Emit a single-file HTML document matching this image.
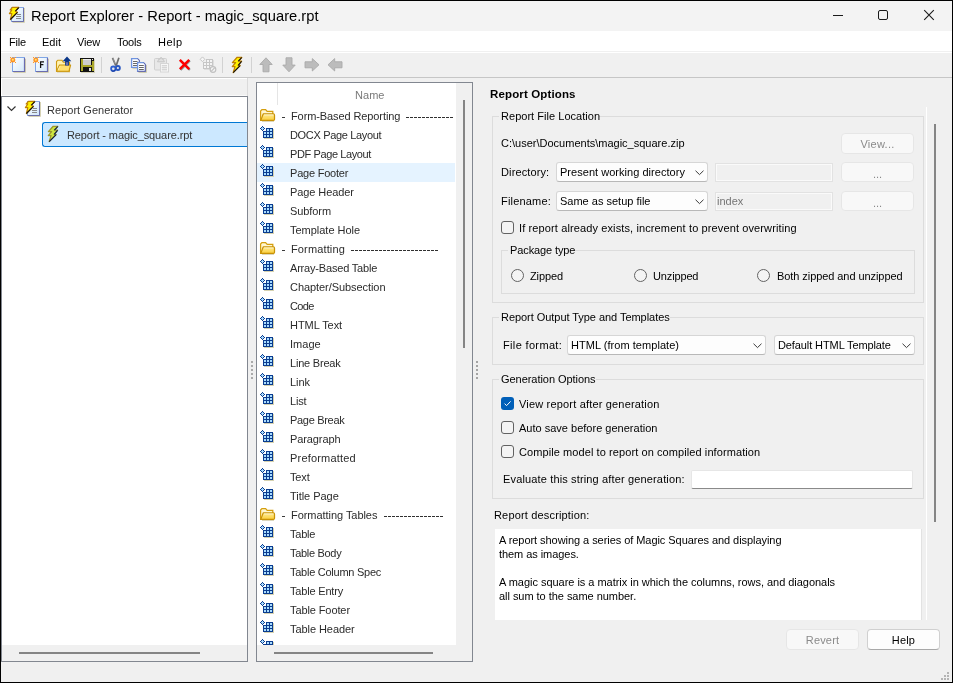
<!DOCTYPE html>
<html><head><meta charset="utf-8">
<style>
*{box-sizing:border-box}
html,body{margin:0;padding:0}
body{width:953px;height:683px;overflow:hidden;position:relative;background:#f0f0f0;font-family:"Liberation Sans",sans-serif;font-size:11px;color:#1a1a1a}
.a{position:absolute}
.t{position:absolute;white-space:pre;line-height:14px;will-change:transform}
</style></head><body>
<div class="a" style="left:0px;top:0px;width:953px;height:31px;background:#f3f3f3"></div><svg class="a" style="left:8px;top:5px" width="18" height="18" viewBox="0 0 18 18" ><defs><linearGradient id="pg" x1="0" y1="0" x2="1" y2="1"><stop offset="0" stop-color="#ffffff"/><stop offset="1" stop-color="#cfe6fb"/></linearGradient></defs><path d="M4.5 17.5 H16.5 V3" fill="none" stroke="#d6d2b4" stroke-width="1"/><rect x="3.5" y="2.5" width="12" height="14" fill="url(#pg)" stroke="#86a6e0" stroke-width="1"/><path d="M15.5 3 V16.5 H4" fill="none" stroke="#6c6ea8" stroke-width="1"/><path d="M9 9.5 H13 M8 11.5 H13 M8 13.5 H13" stroke="#8a8a8a" stroke-width="1"/><path d="M4.4 2.4 H10.8 L7.4 6.2 L9.5 7.2 L2.4 14.5 L3.8 8.6 H1.4 L3.8 5 H2.2 Z" fill="#fff200" stroke="#c08000" stroke-width="1.2" stroke-linejoin="round"/><path d="M10.8 2.6 L7.4 6.2 M9.5 7.4 L2.4 14.5" stroke="#111" stroke-width="1.1"/></svg><div class="t" style="left:31px;top:5.5px;font-size:14.7px;color:#000;line-height:20px;letter-spacing:0.024px;">Report Explorer - Report - magic_square.rpt</div><div class="a" style="left:833px;top:15px;width:10px;height:1px;background:#1a1a1a"></div><div class="a" style="left:878px;top:10px;width:10px;height:10px;border:1px solid #1a1a1a;border-radius:2px"></div><svg class="a" style="left:923px;top:9px" width="13" height="13" viewBox="0 0 13 13"><path d="M1.2 1.2 L10.8 10.8 M10.8 1.2 L1.2 10.8" stroke="#1a1a1a" stroke-width="1.1"/></svg>
<div class="a" style="left:0px;top:31px;width:953px;height:20px;background:#fff"></div><div class="a" style="left:0px;top:51px;width:953px;height:1px;background:#f0f0f0"></div><div class="a" style="left:0px;top:52px;width:953px;height:1px;background:#fff"></div><div class="t" style="left:9px;top:35px;font-size:11px;color:#000;line-height:14px;letter-spacing:-0.200px;">File</div><div class="t" style="left:42px;top:35px;font-size:11px;color:#000;line-height:14px;">Edit</div><div class="t" style="left:77px;top:35px;font-size:11px;color:#000;line-height:14px;letter-spacing:-0.167px;">View</div><div class="t" style="left:117px;top:35px;font-size:11px;color:#000;line-height:14px;letter-spacing:-0.250px;">Tools</div><div class="t" style="left:158px;top:35px;font-size:11px;color:#000;line-height:14px;letter-spacing:0.500px;">Help</div><div class="a" style="left:0px;top:77px;width:953px;height:1px;background:#c6c6c6"></div>
<svg class="a" style="left:10px;top:56px" width="17" height="17" viewBox="0 0 17 17" ><defs><linearGradient id="np" x1="0" y1="0" x2="1" y2="1"><stop offset="0" stop-color="#ffffff"/><stop offset="1" stop-color="#d2e8fb"/></linearGradient></defs><path d="M3.5 16.5 H15.5 V3" fill="none" stroke="#d4d0b2" stroke-width="1"/><rect x="2.5" y="1.5" width="12" height="14" fill="url(#np)" stroke="#80a6e6" stroke-width="1"/><path d="M14.5 2 V15.5 H3" fill="none" stroke="#6a6cb0" stroke-width="1.2"/><circle cx="2.8" cy="3.9" r="2.5" fill="#ff9422"/><circle cx="2.8" cy="3.7" r="1.0" fill="#ffe27a"/><g shape-rendering="crispEdges" fill="#ff9a28"><rect x="0" y="1" width="1" height="1"/><rect x="5" y="1" width="1" height="1"/><rect x="0" y="6" width="1" height="1"/><rect x="5" y="6" width="1" height="1"/></g></svg><svg class="a" style="left:33px;top:56px" width="17" height="17" viewBox="0 0 17 17" ><defs><linearGradient id="np" x1="0" y1="0" x2="1" y2="1"><stop offset="0" stop-color="#ffffff"/><stop offset="1" stop-color="#d2e8fb"/></linearGradient></defs><path d="M3.5 16.5 H15.5 V3" fill="none" stroke="#d4d0b2" stroke-width="1"/><rect x="2.5" y="1.5" width="12" height="14" fill="url(#np)" stroke="#80a6e6" stroke-width="1"/><path d="M14.5 2 V15.5 H3" fill="none" stroke="#6a6cb0" stroke-width="1.2"/><path d="M7.6 12 V5.8 H11 M7.6 8.7 H10.4" fill="none" stroke="#111" stroke-width="1.25"/><circle cx="2.8" cy="3.9" r="2.5" fill="#ff9422"/><circle cx="2.8" cy="3.7" r="1.0" fill="#ffe27a"/><g shape-rendering="crispEdges" fill="#ff9a28"><rect x="0" y="1" width="1" height="1"/><rect x="5" y="1" width="1" height="1"/><rect x="0" y="6" width="1" height="1"/><rect x="5" y="6" width="1" height="1"/></g></svg><svg class="a" style="left:54px;top:54px" width="19" height="19" viewBox="0 0 19 19" ><path d="M3 18.2 H16" stroke="#d8d2b6"/><path d="M2.5 17.2 V7.5 L3.8 6.2 H8 L9.3 8.3 H15.5 V17.2 Z" fill="#fff2b0" stroke="#cf9c12" stroke-width="1.1"/><path d="M2.6 17.2 L5.5 11 H16.6 L15 17.2 Z" fill="#ffe06e" stroke="#c99510" stroke-width="1.1" stroke-linejoin="round"/><path d="M4 16.2 L6 12" stroke="#fff7c0" stroke-width="0.8"/><path d="M13 2.6 L17.3 7.2 H14.9 V11.6 H11.1 V7.2 H8.7 Z" fill="#0b3788"/><rect x="12" y="8.2" width="2" height="3.4" fill="#6f70a8"/></svg><svg class="a" style="left:77px;top:54px" width="19" height="19" viewBox="0 0 19 19" ><g shape-rendering="crispEdges"><rect x="4" y="17.5" width="14" height="1" fill="#d6d2b8"/><rect x="17" y="5" width="1" height="13" fill="#d6d2b8"/><rect x="3" y="4" width="14" height="14" fill="#121212"/><rect x="4" y="5" width="2" height="12" fill="#aaa62a"/><rect x="15" y="7" width="2" height="10" fill="#aaa62a"/><rect x="4" y="11" width="13" height="2" fill="#aaa62a"/><rect x="6" y="5" width="8" height="6" fill="#cdcdcd"/><rect x="6" y="5" width="8" height="1" fill="#ececec"/><rect x="12" y="14" width="2" height="3" fill="#e2e2e2"/><rect x="15" y="5" width="1" height="1" fill="#e8e8e8"/></g></svg><div class="a" style="left:101px;top:57px;width:1px;height:16px;background:#d2d2d2"></div><svg class="a" style="left:106px;top:54px" width="19" height="19" viewBox="0 0 19 19" ><path d="M6.5 3.8 L9.8 11.6 M12.9 3.8 L10.2 11.6" stroke="#6e6e6e" stroke-width="1.7"/><path d="M6.8 4.3 L9.3 10" stroke="#b8b8b8" stroke-width="0.5"/><circle cx="7.3" cy="14.7" r="2.2" fill="#e8e8e8" stroke="#2f60d0" stroke-width="1.8"/><circle cx="11.9" cy="14.0" r="2.0" fill="#e8e8e8" stroke="#2856c0" stroke-width="1.8"/><path d="M5.5 16.6 A2.2 2.2 0 0 0 9.3 15.6" fill="none" stroke="#12308a" stroke-width="0.9"/></svg><svg class="a" style="left:129px;top:54px" width="19" height="19" viewBox="0 0 19 19" ><path d="M3.5 14.6 H10" stroke="#d2ceb0"/><path d="M2.6 4.6 H8.6 L10.4 6.4 V13.4 H2.6 Z" fill="#fff" stroke="#6f94e0" stroke-width="1.3"/><path d="M8.6 4.6 L10.4 6.4 V13.4" fill="none" stroke="#6a6aa8" stroke-width="1"/><path d="M4 7.5 H8.5 M4 9.5 H8 M4 11.5 H8" stroke="#6a6a6a"/><path d="M9.5 18.5 H17.5 V11" fill="none" stroke="#d2ceb0"/><path d="M8.6 8.6 H14.6 L16.4 10.4 V17.4 H8.6 Z" fill="#fff" stroke="#6f94e0" stroke-width="1.3"/><path d="M14.6 8.6 L16.4 10.4 V17.4 H8.6" fill="none" stroke="#6a6aa8" stroke-width="1"/><path d="M10 11.5 H14.8 M10 13.5 H14.8 M10 15.5 H14.8" stroke="#666"/></svg><svg class="a" style="left:152px;top:54px" width="19" height="19" viewBox="0 0 19 19" ><rect x="2.5" y="4.5" width="12" height="11.5" rx="1" fill="#e8e8e8" stroke="#d0d0d0"/><path d="M5.5 7.8 L6.8 5.2 H8 L8.6 3.6 H9.6 L10.2 5.2 H11.2 L12.4 7.8 Z" fill="#e0e0e0" stroke="#c4c4c4" stroke-width="0.9"/><rect x="8.5" y="9.5" width="8" height="8.5" fill="#f7f7f7" stroke="#d6d6d6"/><path d="M9.8 11.8 H15 M9.8 13.8 H15 M9.8 15.8 H15" stroke="#c8c8c8"/></svg><svg class="a" style="left:175px;top:54px" width="19" height="19" viewBox="0 0 19 19" ><path d="M4.8 5.8 L14.2 15.2 M14.2 5.8 L4.8 15.2" stroke="#8a9494" stroke-width="2.3" transform="translate(0.7,0.7)"/><path d="M4.8 5.8 L14.2 15.2 M14.2 5.8 L4.8 15.2" stroke="#ff0000" stroke-width="2.4"/></svg><svg class="a" style="left:198px;top:54px" width="19" height="19" viewBox="0 0 19 19" ><g shape-rendering="crispEdges"><rect x="6" y="15" width="10" height="1" fill="#dedede"/><rect x="15" y="6" width="1" height="10" fill="#dedede"/><rect x="5" y="8" width="10" height="7" fill="#c6c6c6"/><rect x="8" y="5" width="7" height="3" fill="#c6c6c6"/><rect x="9" y="6" width="2" height="2" fill="#f4f4f4"/><rect x="12" y="6" width="2" height="2" fill="#f4f4f4"/><rect x="6" y="9" width="2" height="2" fill="#f4f4f4"/><rect x="9" y="9" width="2" height="2" fill="#f4f4f4"/><rect x="12" y="9" width="2" height="2" fill="#f4f4f4"/><rect x="6" y="12" width="2" height="2" fill="#f4f4f4"/><rect x="9" y="12" width="2" height="2" fill="#f4f4f4"/><rect x="12" y="12" width="2" height="2" fill="#f4f4f4"/></g><path d="M4.5 2.9 L6.8 5.3 L4.5 7.7 L2.2 5.3 Z" fill="#f6f6f6" stroke="#c6c6c6"/><circle cx="15" cy="15.5" r="2.8" fill="#f4f4f4" stroke="#c0c0c0" stroke-width="1.2"/><path d="M13.2 17.3 L16.8 13.7" stroke="#c0c0c0" stroke-width="1.2"/></svg><div class="a" style="left:222px;top:57px;width:1px;height:16px;background:#d2d2d2"></div><svg class="a" style="left:230px;top:56px" width="14" height="18" viewBox="0 0 14 18" ><path d="M7.2 1.3 H11.8 L8.4 5.2 H11.6 L8.2 9.4 H10.2 L3.2 16.6 L5 10.6 H2.3 L5.6 6.6 H2.4 Z" fill="#fff200" stroke="#c08000" stroke-width="1.3" stroke-linejoin="round"/><path d="M11.8 1.5 L8.4 5.2 M11.6 5.4 L8.2 9.4 M10.2 9.6 L3.2 16.6" stroke="#111" stroke-width="1.1"/></svg><div class="a" style="left:251px;top:57px;width:1px;height:16px;background:#d2d2d2"></div><svg class="a" style="left:256px;top:54px" width="21" height="21" viewBox="0 0 21 21" ><g transform="rotate(0 10 10.8)"><path d="M10 3.8 L16.2 10.5 H13 V17.8 H7 V10.5 H3.8 Z" fill="#bcbcbc" stroke="#a9a9a9" stroke-width="0.9" stroke-linejoin="round"/></g></svg><svg class="a" style="left:279px;top:54px" width="21" height="21" viewBox="0 0 21 21" ><g transform="rotate(180 10 10.8)"><path d="M10 3.8 L16.2 10.5 H13 V17.8 H7 V10.5 H3.8 Z" fill="#bcbcbc" stroke="#a9a9a9" stroke-width="0.9" stroke-linejoin="round"/></g></svg><svg class="a" style="left:302px;top:54px" width="21" height="21" viewBox="0 0 21 21" ><g transform="rotate(90 10 10.8)"><path d="M10 3.8 L16.2 10.5 H13 V17.8 H7 V10.5 H3.8 Z" fill="#bcbcbc" stroke="#a9a9a9" stroke-width="0.9" stroke-linejoin="round"/></g></svg><svg class="a" style="left:325px;top:54px" width="21" height="21" viewBox="0 0 21 21" ><g transform="rotate(270 10 10.8)"><path d="M10 3.8 L16.2 10.5 H13 V17.8 H7 V10.5 H3.8 Z" fill="#bcbcbc" stroke="#a9a9a9" stroke-width="0.9" stroke-linejoin="round"/></g></svg>
<div class="a" style="left:247px;top:78px;width:1px;height:18px;background:#dadada"></div><div class="a" style="left:1px;top:78px;width:246px;height:1px;background:#fff"></div><div class="a" style="left:1px;top:95px;width:246px;height:1px;background:#fafafa"></div><div class="a" style="left:1px;top:78px;width:1px;height:18px;background:#fff"></div><div class="a" style="left:1px;top:96px;width:247px;height:566px;border:1px solid #828790;background:#fff"></div><div class="a" style="left:2px;top:645px;width:245px;height:16px;background:#f0f0f0"></div><div class="a" style="left:19px;top:652px;width:181px;height:2px;background:#858585"></div><svg class="a" style="left:6px;top:105px" width="11" height="8" viewBox="0 0 11 8"><path d="M1.5 1.5 L5.5 5.5 L9.5 1.5" fill="none" stroke="#333" stroke-width="1.15"/></svg><svg class="a" style="left:24px;top:99px" width="18" height="18" viewBox="0 0 18 18" ><defs><linearGradient id="pg" x1="0" y1="0" x2="1" y2="1"><stop offset="0" stop-color="#ffffff"/><stop offset="1" stop-color="#cfe6fb"/></linearGradient></defs><path d="M4.5 17.5 H16.5 V3" fill="none" stroke="#d6d2b4" stroke-width="1"/><rect x="3.5" y="2.5" width="12" height="14" fill="url(#pg)" stroke="#86a6e0" stroke-width="1"/><path d="M15.5 3 V16.5 H4" fill="none" stroke="#6c6ea8" stroke-width="1"/><path d="M9 9.5 H13 M8 11.5 H13 M8 13.5 H13" stroke="#8a8a8a" stroke-width="1"/><path d="M4.4 2.4 H10.8 L7.4 6.2 L9.5 7.2 L2.4 14.5 L3.8 8.6 H1.4 L3.8 5 H2.2 Z" fill="#fff200" stroke="#c08000" stroke-width="1.2" stroke-linejoin="round"/><path d="M10.8 2.6 L7.4 6.2 M9.5 7.4 L2.4 14.5" stroke="#111" stroke-width="1.1"/></svg><div class="t" style="left:47px;top:103px;font-size:11px;color:#333;line-height:14px;letter-spacing:0.033px;">Report Generator</div><div class="a" style="left:42px;top:122px;width:205px;height:25px;border:1px solid #0078d4;border-right:none;border-radius:3px 0 0 3px;background:#cce8ff"></div><svg class="a" style="left:46px;top:125px" width="14" height="18" viewBox="0 0 14 18" ><path d="M7.2 1.3 H11.8 L8.4 5.2 H11.6 L8.2 9.4 H10.2 L3.2 16.6 L5 10.6 H2.3 L5.6 6.6 H2.4 Z" fill="#cce640" stroke="#9c962c" stroke-width="1.3" stroke-linejoin="round"/><path d="M11.8 1.5 L8.4 5.2 M11.6 5.4 L8.2 9.4 M10.2 9.6 L3.2 16.6" stroke="#0a1a48" stroke-width="1.1"/></svg><div class="t" style="left:67px;top:128px;font-size:11px;color:#333;line-height:14px;letter-spacing:-0.104px;">Report - magic_square.rpt</div>
<div class="a" style="left:256px;top:82px;width:217px;height:580px;border:1px solid #828790;background:#fff"></div><div class="a" style="left:277px;top:83px;width:1px;height:22px;background:#e5e5e5"></div><div class="t" style="left:355px;top:88px;font-size:11px;color:#7a7a7a;line-height:14px;letter-spacing:0.033px;">Name</div><div class="a" style="left:257px;top:163px;width:198px;height:19px;background:#e5f3ff"></div><div class="a" style="left:0;top:0;width:953px;height:645px;overflow:hidden"><svg class="a" style="left:258px;top:106px" width="18" height="18" viewBox="0 0 18 18" ><defs><linearGradient id="fg" x1="0" y1="0" x2="0" y2="1"><stop offset="0" stop-color="#ffeb94"/><stop offset="1" stop-color="#fbcf3c"/></linearGradient></defs><path d="M4 15.5 H16" stroke="#dcd6bc" stroke-width="1"/><path d="M2.6 14.4 V5 L3.9 3.6 H7.6 L9.2 5.4 H14.8 V14.4 Z" fill="#fff6d0" stroke="#d49e0e" stroke-width="1.25"/><path d="M2.8 14.4 L5.2 7.9 H15.4 Q16.5 7.9 16.5 9.2 V13.2 Q16.5 14.4 15.3 14.4 Z" fill="url(#fg)" stroke="#c99206" stroke-width="1.25" stroke-linejoin="round"/><path d="M6 8.9 H15.5" stroke="#fffbe0" stroke-width="0.8"/></svg><div class="a" style="left:282px;top:117px;width:3px;height:1px;background:#3a3a3a"></div><div class="t" style="left:291px;top:109px;font-size:11px;color:#2b2b2b;line-height:14px;letter-spacing:-0.100px;">Form-Based Reporting</div><div class="a" style="left:406px;top:117px;width:47px;height:1px;background:repeating-linear-gradient(90deg,#303030 0 3px,transparent 3px 4px)"></div><svg class="a" style="left:258px;top:125px" width="18" height="18" viewBox="0 0 18 18" ><g shape-rendering="crispEdges"><rect x="6" y="13" width="10" height="1" fill="#d6d2b0"/><rect x="15" y="4" width="1" height="10" fill="#d6d2b0"/><rect x="5" y="6" width="10" height="7" fill="#0b3c8f"/><rect x="8" y="3" width="7" height="3" fill="#0b3c8f"/><rect x="9" y="4" width="2" height="2" fill="#a8dcff"/><rect x="12" y="4" width="2" height="2" fill="#a8dcff"/><rect x="6" y="7" width="2" height="2" fill="#a8dcff"/><rect x="9" y="7" width="2" height="2" fill="#a8dcff"/><rect x="12" y="7" width="2" height="2" fill="#a8dcff"/><rect x="6" y="10" width="2" height="2" fill="#a8dcff"/><rect x="9" y="10" width="2" height="2" fill="#a8dcff"/><rect x="12" y="10" width="2" height="2" fill="#a8dcff"/></g><g shape-rendering="crispEdges"><rect x="4" y="1" width="1" height="1" fill="#0b3c8f"/><rect x="3" y="2" width="1" height="1" fill="#0b3c8f"/><rect x="4" y="2" width="1" height="1" fill="#a8dcff"/><rect x="5" y="2" width="1" height="1" fill="#0b3c8f"/><rect x="2" y="3" width="1" height="1" fill="#0b3c8f"/><rect x="3" y="3" width="1" height="1" fill="#a8dcff"/><rect x="4" y="3" width="1" height="1" fill="#a8dcff"/><rect x="5" y="3" width="1" height="1" fill="#a8dcff"/><rect x="6" y="3" width="1" height="1" fill="#0b3c8f"/><rect x="3" y="4" width="1" height="1" fill="#0b3c8f"/><rect x="4" y="4" width="1" height="1" fill="#a8dcff"/><rect x="5" y="4" width="1" height="1" fill="#0b3c8f"/><rect x="4" y="5" width="1" height="1" fill="#0b3c8f"/></g></svg><div class="t" style="left:290px;top:128px;font-size:11px;color:#2b2b2b;line-height:14px;letter-spacing:-0.340px;">DOCX Page Layout</div><svg class="a" style="left:258px;top:144px" width="18" height="18" viewBox="0 0 18 18" ><g shape-rendering="crispEdges"><rect x="6" y="13" width="10" height="1" fill="#d6d2b0"/><rect x="15" y="4" width="1" height="10" fill="#d6d2b0"/><rect x="5" y="6" width="10" height="7" fill="#0b3c8f"/><rect x="8" y="3" width="7" height="3" fill="#0b3c8f"/><rect x="9" y="4" width="2" height="2" fill="#a8dcff"/><rect x="12" y="4" width="2" height="2" fill="#a8dcff"/><rect x="6" y="7" width="2" height="2" fill="#a8dcff"/><rect x="9" y="7" width="2" height="2" fill="#a8dcff"/><rect x="12" y="7" width="2" height="2" fill="#a8dcff"/><rect x="6" y="10" width="2" height="2" fill="#a8dcff"/><rect x="9" y="10" width="2" height="2" fill="#a8dcff"/><rect x="12" y="10" width="2" height="2" fill="#a8dcff"/></g><g shape-rendering="crispEdges"><rect x="4" y="1" width="1" height="1" fill="#0b3c8f"/><rect x="3" y="2" width="1" height="1" fill="#0b3c8f"/><rect x="4" y="2" width="1" height="1" fill="#a8dcff"/><rect x="5" y="2" width="1" height="1" fill="#0b3c8f"/><rect x="2" y="3" width="1" height="1" fill="#0b3c8f"/><rect x="3" y="3" width="1" height="1" fill="#a8dcff"/><rect x="4" y="3" width="1" height="1" fill="#a8dcff"/><rect x="5" y="3" width="1" height="1" fill="#a8dcff"/><rect x="6" y="3" width="1" height="1" fill="#0b3c8f"/><rect x="3" y="4" width="1" height="1" fill="#0b3c8f"/><rect x="4" y="4" width="1" height="1" fill="#a8dcff"/><rect x="5" y="4" width="1" height="1" fill="#0b3c8f"/><rect x="4" y="5" width="1" height="1" fill="#0b3c8f"/></g></svg><div class="t" style="left:290px;top:147px;font-size:11px;color:#2b2b2b;line-height:14px;letter-spacing:-0.393px;">PDF Page Layout</div><svg class="a" style="left:258px;top:163px" width="18" height="18" viewBox="0 0 18 18" ><g shape-rendering="crispEdges"><rect x="6" y="13" width="10" height="1" fill="#d6d2b0"/><rect x="15" y="4" width="1" height="10" fill="#d6d2b0"/><rect x="5" y="6" width="10" height="7" fill="#0b3c8f"/><rect x="8" y="3" width="7" height="3" fill="#0b3c8f"/><rect x="9" y="4" width="2" height="2" fill="#a8dcff"/><rect x="12" y="4" width="2" height="2" fill="#a8dcff"/><rect x="6" y="7" width="2" height="2" fill="#a8dcff"/><rect x="9" y="7" width="2" height="2" fill="#a8dcff"/><rect x="12" y="7" width="2" height="2" fill="#a8dcff"/><rect x="6" y="10" width="2" height="2" fill="#a8dcff"/><rect x="9" y="10" width="2" height="2" fill="#a8dcff"/><rect x="12" y="10" width="2" height="2" fill="#a8dcff"/></g><g shape-rendering="crispEdges"><rect x="4" y="1" width="1" height="1" fill="#0b3c8f"/><rect x="3" y="2" width="1" height="1" fill="#0b3c8f"/><rect x="4" y="2" width="1" height="1" fill="#a8dcff"/><rect x="5" y="2" width="1" height="1" fill="#0b3c8f"/><rect x="2" y="3" width="1" height="1" fill="#0b3c8f"/><rect x="3" y="3" width="1" height="1" fill="#a8dcff"/><rect x="4" y="3" width="1" height="1" fill="#a8dcff"/><rect x="5" y="3" width="1" height="1" fill="#a8dcff"/><rect x="6" y="3" width="1" height="1" fill="#0b3c8f"/><rect x="3" y="4" width="1" height="1" fill="#0b3c8f"/><rect x="4" y="4" width="1" height="1" fill="#a8dcff"/><rect x="5" y="4" width="1" height="1" fill="#0b3c8f"/><rect x="4" y="5" width="1" height="1" fill="#0b3c8f"/></g></svg><div class="t" style="left:290px;top:166px;font-size:11px;color:#2b2b2b;line-height:14px;letter-spacing:-0.210px;">Page Footer</div><svg class="a" style="left:258px;top:182px" width="18" height="18" viewBox="0 0 18 18" ><g shape-rendering="crispEdges"><rect x="6" y="13" width="10" height="1" fill="#d6d2b0"/><rect x="15" y="4" width="1" height="10" fill="#d6d2b0"/><rect x="5" y="6" width="10" height="7" fill="#0b3c8f"/><rect x="8" y="3" width="7" height="3" fill="#0b3c8f"/><rect x="9" y="4" width="2" height="2" fill="#a8dcff"/><rect x="12" y="4" width="2" height="2" fill="#a8dcff"/><rect x="6" y="7" width="2" height="2" fill="#a8dcff"/><rect x="9" y="7" width="2" height="2" fill="#a8dcff"/><rect x="12" y="7" width="2" height="2" fill="#a8dcff"/><rect x="6" y="10" width="2" height="2" fill="#a8dcff"/><rect x="9" y="10" width="2" height="2" fill="#a8dcff"/><rect x="12" y="10" width="2" height="2" fill="#a8dcff"/></g><g shape-rendering="crispEdges"><rect x="4" y="1" width="1" height="1" fill="#0b3c8f"/><rect x="3" y="2" width="1" height="1" fill="#0b3c8f"/><rect x="4" y="2" width="1" height="1" fill="#a8dcff"/><rect x="5" y="2" width="1" height="1" fill="#0b3c8f"/><rect x="2" y="3" width="1" height="1" fill="#0b3c8f"/><rect x="3" y="3" width="1" height="1" fill="#a8dcff"/><rect x="4" y="3" width="1" height="1" fill="#a8dcff"/><rect x="5" y="3" width="1" height="1" fill="#a8dcff"/><rect x="6" y="3" width="1" height="1" fill="#0b3c8f"/><rect x="3" y="4" width="1" height="1" fill="#0b3c8f"/><rect x="4" y="4" width="1" height="1" fill="#a8dcff"/><rect x="5" y="4" width="1" height="1" fill="#0b3c8f"/><rect x="4" y="5" width="1" height="1" fill="#0b3c8f"/></g></svg><div class="t" style="left:290px;top:185px;font-size:11px;color:#2b2b2b;line-height:14px;letter-spacing:-0.090px;">Page Header</div><svg class="a" style="left:258px;top:201px" width="18" height="18" viewBox="0 0 18 18" ><g shape-rendering="crispEdges"><rect x="6" y="13" width="10" height="1" fill="#d6d2b0"/><rect x="15" y="4" width="1" height="10" fill="#d6d2b0"/><rect x="5" y="6" width="10" height="7" fill="#0b3c8f"/><rect x="8" y="3" width="7" height="3" fill="#0b3c8f"/><rect x="9" y="4" width="2" height="2" fill="#a8dcff"/><rect x="12" y="4" width="2" height="2" fill="#a8dcff"/><rect x="6" y="7" width="2" height="2" fill="#a8dcff"/><rect x="9" y="7" width="2" height="2" fill="#a8dcff"/><rect x="12" y="7" width="2" height="2" fill="#a8dcff"/><rect x="6" y="10" width="2" height="2" fill="#a8dcff"/><rect x="9" y="10" width="2" height="2" fill="#a8dcff"/><rect x="12" y="10" width="2" height="2" fill="#a8dcff"/></g><g shape-rendering="crispEdges"><rect x="4" y="1" width="1" height="1" fill="#0b3c8f"/><rect x="3" y="2" width="1" height="1" fill="#0b3c8f"/><rect x="4" y="2" width="1" height="1" fill="#a8dcff"/><rect x="5" y="2" width="1" height="1" fill="#0b3c8f"/><rect x="2" y="3" width="1" height="1" fill="#0b3c8f"/><rect x="3" y="3" width="1" height="1" fill="#a8dcff"/><rect x="4" y="3" width="1" height="1" fill="#a8dcff"/><rect x="5" y="3" width="1" height="1" fill="#a8dcff"/><rect x="6" y="3" width="1" height="1" fill="#0b3c8f"/><rect x="3" y="4" width="1" height="1" fill="#0b3c8f"/><rect x="4" y="4" width="1" height="1" fill="#a8dcff"/><rect x="5" y="4" width="1" height="1" fill="#0b3c8f"/><rect x="4" y="5" width="1" height="1" fill="#0b3c8f"/></g></svg><div class="t" style="left:290px;top:204px;font-size:11px;color:#2b2b2b;line-height:14px;letter-spacing:-0.083px;">Subform</div><svg class="a" style="left:258px;top:220px" width="18" height="18" viewBox="0 0 18 18" ><g shape-rendering="crispEdges"><rect x="6" y="13" width="10" height="1" fill="#d6d2b0"/><rect x="15" y="4" width="1" height="10" fill="#d6d2b0"/><rect x="5" y="6" width="10" height="7" fill="#0b3c8f"/><rect x="8" y="3" width="7" height="3" fill="#0b3c8f"/><rect x="9" y="4" width="2" height="2" fill="#a8dcff"/><rect x="12" y="4" width="2" height="2" fill="#a8dcff"/><rect x="6" y="7" width="2" height="2" fill="#a8dcff"/><rect x="9" y="7" width="2" height="2" fill="#a8dcff"/><rect x="12" y="7" width="2" height="2" fill="#a8dcff"/><rect x="6" y="10" width="2" height="2" fill="#a8dcff"/><rect x="9" y="10" width="2" height="2" fill="#a8dcff"/><rect x="12" y="10" width="2" height="2" fill="#a8dcff"/></g><g shape-rendering="crispEdges"><rect x="4" y="1" width="1" height="1" fill="#0b3c8f"/><rect x="3" y="2" width="1" height="1" fill="#0b3c8f"/><rect x="4" y="2" width="1" height="1" fill="#a8dcff"/><rect x="5" y="2" width="1" height="1" fill="#0b3c8f"/><rect x="2" y="3" width="1" height="1" fill="#0b3c8f"/><rect x="3" y="3" width="1" height="1" fill="#a8dcff"/><rect x="4" y="3" width="1" height="1" fill="#a8dcff"/><rect x="5" y="3" width="1" height="1" fill="#a8dcff"/><rect x="6" y="3" width="1" height="1" fill="#0b3c8f"/><rect x="3" y="4" width="1" height="1" fill="#0b3c8f"/><rect x="4" y="4" width="1" height="1" fill="#a8dcff"/><rect x="5" y="4" width="1" height="1" fill="#0b3c8f"/><rect x="4" y="5" width="1" height="1" fill="#0b3c8f"/></g></svg><div class="t" style="left:290px;top:223px;font-size:11px;color:#2b2b2b;line-height:14px;letter-spacing:-0.017px;">Template Hole</div><svg class="a" style="left:258px;top:239px" width="18" height="18" viewBox="0 0 18 18" ><defs><linearGradient id="fg" x1="0" y1="0" x2="0" y2="1"><stop offset="0" stop-color="#ffeb94"/><stop offset="1" stop-color="#fbcf3c"/></linearGradient></defs><path d="M4 15.5 H16" stroke="#dcd6bc" stroke-width="1"/><path d="M2.6 14.4 V5 L3.9 3.6 H7.6 L9.2 5.4 H14.8 V14.4 Z" fill="#fff6d0" stroke="#d49e0e" stroke-width="1.25"/><path d="M2.8 14.4 L5.2 7.9 H15.4 Q16.5 7.9 16.5 9.2 V13.2 Q16.5 14.4 15.3 14.4 Z" fill="url(#fg)" stroke="#c99206" stroke-width="1.25" stroke-linejoin="round"/><path d="M6 8.9 H15.5" stroke="#fffbe0" stroke-width="0.8"/></svg><div class="a" style="left:282px;top:250px;width:3px;height:1px;background:#3a3a3a"></div><div class="t" style="left:291px;top:242px;font-size:11px;color:#2b2b2b;line-height:14px;letter-spacing:0.133px;">Formatting</div><div class="a" style="left:351px;top:250px;width:87px;height:1px;background:repeating-linear-gradient(90deg,#303030 0 3px,transparent 3px 4px)"></div><svg class="a" style="left:258px;top:258px" width="18" height="18" viewBox="0 0 18 18" ><g shape-rendering="crispEdges"><rect x="6" y="13" width="10" height="1" fill="#d6d2b0"/><rect x="15" y="4" width="1" height="10" fill="#d6d2b0"/><rect x="5" y="6" width="10" height="7" fill="#0b3c8f"/><rect x="8" y="3" width="7" height="3" fill="#0b3c8f"/><rect x="9" y="4" width="2" height="2" fill="#a8dcff"/><rect x="12" y="4" width="2" height="2" fill="#a8dcff"/><rect x="6" y="7" width="2" height="2" fill="#a8dcff"/><rect x="9" y="7" width="2" height="2" fill="#a8dcff"/><rect x="12" y="7" width="2" height="2" fill="#a8dcff"/><rect x="6" y="10" width="2" height="2" fill="#a8dcff"/><rect x="9" y="10" width="2" height="2" fill="#a8dcff"/><rect x="12" y="10" width="2" height="2" fill="#a8dcff"/></g><g shape-rendering="crispEdges"><rect x="4" y="1" width="1" height="1" fill="#0b3c8f"/><rect x="3" y="2" width="1" height="1" fill="#0b3c8f"/><rect x="4" y="2" width="1" height="1" fill="#a8dcff"/><rect x="5" y="2" width="1" height="1" fill="#0b3c8f"/><rect x="2" y="3" width="1" height="1" fill="#0b3c8f"/><rect x="3" y="3" width="1" height="1" fill="#a8dcff"/><rect x="4" y="3" width="1" height="1" fill="#a8dcff"/><rect x="5" y="3" width="1" height="1" fill="#a8dcff"/><rect x="6" y="3" width="1" height="1" fill="#0b3c8f"/><rect x="3" y="4" width="1" height="1" fill="#0b3c8f"/><rect x="4" y="4" width="1" height="1" fill="#a8dcff"/><rect x="5" y="4" width="1" height="1" fill="#0b3c8f"/><rect x="4" y="5" width="1" height="1" fill="#0b3c8f"/></g></svg><div class="t" style="left:290px;top:261px;font-size:11px;color:#2b2b2b;line-height:14px;letter-spacing:-0.188px;">Array-Based Table</div><svg class="a" style="left:258px;top:277px" width="18" height="18" viewBox="0 0 18 18" ><g shape-rendering="crispEdges"><rect x="6" y="13" width="10" height="1" fill="#d6d2b0"/><rect x="15" y="4" width="1" height="10" fill="#d6d2b0"/><rect x="5" y="6" width="10" height="7" fill="#0b3c8f"/><rect x="8" y="3" width="7" height="3" fill="#0b3c8f"/><rect x="9" y="4" width="2" height="2" fill="#a8dcff"/><rect x="12" y="4" width="2" height="2" fill="#a8dcff"/><rect x="6" y="7" width="2" height="2" fill="#a8dcff"/><rect x="9" y="7" width="2" height="2" fill="#a8dcff"/><rect x="12" y="7" width="2" height="2" fill="#a8dcff"/><rect x="6" y="10" width="2" height="2" fill="#a8dcff"/><rect x="9" y="10" width="2" height="2" fill="#a8dcff"/><rect x="12" y="10" width="2" height="2" fill="#a8dcff"/></g><g shape-rendering="crispEdges"><rect x="4" y="1" width="1" height="1" fill="#0b3c8f"/><rect x="3" y="2" width="1" height="1" fill="#0b3c8f"/><rect x="4" y="2" width="1" height="1" fill="#a8dcff"/><rect x="5" y="2" width="1" height="1" fill="#0b3c8f"/><rect x="2" y="3" width="1" height="1" fill="#0b3c8f"/><rect x="3" y="3" width="1" height="1" fill="#a8dcff"/><rect x="4" y="3" width="1" height="1" fill="#a8dcff"/><rect x="5" y="3" width="1" height="1" fill="#a8dcff"/><rect x="6" y="3" width="1" height="1" fill="#0b3c8f"/><rect x="3" y="4" width="1" height="1" fill="#0b3c8f"/><rect x="4" y="4" width="1" height="1" fill="#a8dcff"/><rect x="5" y="4" width="1" height="1" fill="#0b3c8f"/><rect x="4" y="5" width="1" height="1" fill="#0b3c8f"/></g></svg><div class="t" style="left:290px;top:280px;font-size:11px;color:#2b2b2b;line-height:14px;letter-spacing:-0.065px;">Chapter/Subsection</div><svg class="a" style="left:258px;top:296px" width="18" height="18" viewBox="0 0 18 18" ><g shape-rendering="crispEdges"><rect x="6" y="13" width="10" height="1" fill="#d6d2b0"/><rect x="15" y="4" width="1" height="10" fill="#d6d2b0"/><rect x="5" y="6" width="10" height="7" fill="#0b3c8f"/><rect x="8" y="3" width="7" height="3" fill="#0b3c8f"/><rect x="9" y="4" width="2" height="2" fill="#a8dcff"/><rect x="12" y="4" width="2" height="2" fill="#a8dcff"/><rect x="6" y="7" width="2" height="2" fill="#a8dcff"/><rect x="9" y="7" width="2" height="2" fill="#a8dcff"/><rect x="12" y="7" width="2" height="2" fill="#a8dcff"/><rect x="6" y="10" width="2" height="2" fill="#a8dcff"/><rect x="9" y="10" width="2" height="2" fill="#a8dcff"/><rect x="12" y="10" width="2" height="2" fill="#a8dcff"/></g><g shape-rendering="crispEdges"><rect x="4" y="1" width="1" height="1" fill="#0b3c8f"/><rect x="3" y="2" width="1" height="1" fill="#0b3c8f"/><rect x="4" y="2" width="1" height="1" fill="#a8dcff"/><rect x="5" y="2" width="1" height="1" fill="#0b3c8f"/><rect x="2" y="3" width="1" height="1" fill="#0b3c8f"/><rect x="3" y="3" width="1" height="1" fill="#a8dcff"/><rect x="4" y="3" width="1" height="1" fill="#a8dcff"/><rect x="5" y="3" width="1" height="1" fill="#a8dcff"/><rect x="6" y="3" width="1" height="1" fill="#0b3c8f"/><rect x="3" y="4" width="1" height="1" fill="#0b3c8f"/><rect x="4" y="4" width="1" height="1" fill="#a8dcff"/><rect x="5" y="4" width="1" height="1" fill="#0b3c8f"/><rect x="4" y="5" width="1" height="1" fill="#0b3c8f"/></g></svg><div class="t" style="left:290px;top:299px;font-size:11px;color:#2b2b2b;line-height:14px;letter-spacing:-0.633px;">Code</div><svg class="a" style="left:258px;top:315px" width="18" height="18" viewBox="0 0 18 18" ><g shape-rendering="crispEdges"><rect x="6" y="13" width="10" height="1" fill="#d6d2b0"/><rect x="15" y="4" width="1" height="10" fill="#d6d2b0"/><rect x="5" y="6" width="10" height="7" fill="#0b3c8f"/><rect x="8" y="3" width="7" height="3" fill="#0b3c8f"/><rect x="9" y="4" width="2" height="2" fill="#a8dcff"/><rect x="12" y="4" width="2" height="2" fill="#a8dcff"/><rect x="6" y="7" width="2" height="2" fill="#a8dcff"/><rect x="9" y="7" width="2" height="2" fill="#a8dcff"/><rect x="12" y="7" width="2" height="2" fill="#a8dcff"/><rect x="6" y="10" width="2" height="2" fill="#a8dcff"/><rect x="9" y="10" width="2" height="2" fill="#a8dcff"/><rect x="12" y="10" width="2" height="2" fill="#a8dcff"/></g><g shape-rendering="crispEdges"><rect x="4" y="1" width="1" height="1" fill="#0b3c8f"/><rect x="3" y="2" width="1" height="1" fill="#0b3c8f"/><rect x="4" y="2" width="1" height="1" fill="#a8dcff"/><rect x="5" y="2" width="1" height="1" fill="#0b3c8f"/><rect x="2" y="3" width="1" height="1" fill="#0b3c8f"/><rect x="3" y="3" width="1" height="1" fill="#a8dcff"/><rect x="4" y="3" width="1" height="1" fill="#a8dcff"/><rect x="5" y="3" width="1" height="1" fill="#a8dcff"/><rect x="6" y="3" width="1" height="1" fill="#0b3c8f"/><rect x="3" y="4" width="1" height="1" fill="#0b3c8f"/><rect x="4" y="4" width="1" height="1" fill="#a8dcff"/><rect x="5" y="4" width="1" height="1" fill="#0b3c8f"/><rect x="4" y="5" width="1" height="1" fill="#0b3c8f"/></g></svg><div class="t" style="left:290px;top:318px;font-size:11px;color:#2b2b2b;line-height:14px;letter-spacing:-0.050px;">HTML Text</div><svg class="a" style="left:258px;top:334px" width="18" height="18" viewBox="0 0 18 18" ><g shape-rendering="crispEdges"><rect x="6" y="13" width="10" height="1" fill="#d6d2b0"/><rect x="15" y="4" width="1" height="10" fill="#d6d2b0"/><rect x="5" y="6" width="10" height="7" fill="#0b3c8f"/><rect x="8" y="3" width="7" height="3" fill="#0b3c8f"/><rect x="9" y="4" width="2" height="2" fill="#a8dcff"/><rect x="12" y="4" width="2" height="2" fill="#a8dcff"/><rect x="6" y="7" width="2" height="2" fill="#a8dcff"/><rect x="9" y="7" width="2" height="2" fill="#a8dcff"/><rect x="12" y="7" width="2" height="2" fill="#a8dcff"/><rect x="6" y="10" width="2" height="2" fill="#a8dcff"/><rect x="9" y="10" width="2" height="2" fill="#a8dcff"/><rect x="12" y="10" width="2" height="2" fill="#a8dcff"/></g><g shape-rendering="crispEdges"><rect x="4" y="1" width="1" height="1" fill="#0b3c8f"/><rect x="3" y="2" width="1" height="1" fill="#0b3c8f"/><rect x="4" y="2" width="1" height="1" fill="#a8dcff"/><rect x="5" y="2" width="1" height="1" fill="#0b3c8f"/><rect x="2" y="3" width="1" height="1" fill="#0b3c8f"/><rect x="3" y="3" width="1" height="1" fill="#a8dcff"/><rect x="4" y="3" width="1" height="1" fill="#a8dcff"/><rect x="5" y="3" width="1" height="1" fill="#a8dcff"/><rect x="6" y="3" width="1" height="1" fill="#0b3c8f"/><rect x="3" y="4" width="1" height="1" fill="#0b3c8f"/><rect x="4" y="4" width="1" height="1" fill="#a8dcff"/><rect x="5" y="4" width="1" height="1" fill="#0b3c8f"/><rect x="4" y="5" width="1" height="1" fill="#0b3c8f"/></g></svg><div class="t" style="left:290px;top:337px;font-size:11px;color:#2b2b2b;line-height:14px;letter-spacing:0.025px;">Image</div><svg class="a" style="left:258px;top:353px" width="18" height="18" viewBox="0 0 18 18" ><g shape-rendering="crispEdges"><rect x="6" y="13" width="10" height="1" fill="#d6d2b0"/><rect x="15" y="4" width="1" height="10" fill="#d6d2b0"/><rect x="5" y="6" width="10" height="7" fill="#0b3c8f"/><rect x="8" y="3" width="7" height="3" fill="#0b3c8f"/><rect x="9" y="4" width="2" height="2" fill="#a8dcff"/><rect x="12" y="4" width="2" height="2" fill="#a8dcff"/><rect x="6" y="7" width="2" height="2" fill="#a8dcff"/><rect x="9" y="7" width="2" height="2" fill="#a8dcff"/><rect x="12" y="7" width="2" height="2" fill="#a8dcff"/><rect x="6" y="10" width="2" height="2" fill="#a8dcff"/><rect x="9" y="10" width="2" height="2" fill="#a8dcff"/><rect x="12" y="10" width="2" height="2" fill="#a8dcff"/></g><g shape-rendering="crispEdges"><rect x="4" y="1" width="1" height="1" fill="#0b3c8f"/><rect x="3" y="2" width="1" height="1" fill="#0b3c8f"/><rect x="4" y="2" width="1" height="1" fill="#a8dcff"/><rect x="5" y="2" width="1" height="1" fill="#0b3c8f"/><rect x="2" y="3" width="1" height="1" fill="#0b3c8f"/><rect x="3" y="3" width="1" height="1" fill="#a8dcff"/><rect x="4" y="3" width="1" height="1" fill="#a8dcff"/><rect x="5" y="3" width="1" height="1" fill="#a8dcff"/><rect x="6" y="3" width="1" height="1" fill="#0b3c8f"/><rect x="3" y="4" width="1" height="1" fill="#0b3c8f"/><rect x="4" y="4" width="1" height="1" fill="#a8dcff"/><rect x="5" y="4" width="1" height="1" fill="#0b3c8f"/><rect x="4" y="5" width="1" height="1" fill="#0b3c8f"/></g></svg><div class="t" style="left:290px;top:356px;font-size:11px;color:#2b2b2b;line-height:14px;letter-spacing:-0.200px;">Line Break</div><svg class="a" style="left:258px;top:372px" width="18" height="18" viewBox="0 0 18 18" ><g shape-rendering="crispEdges"><rect x="6" y="13" width="10" height="1" fill="#d6d2b0"/><rect x="15" y="4" width="1" height="10" fill="#d6d2b0"/><rect x="5" y="6" width="10" height="7" fill="#0b3c8f"/><rect x="8" y="3" width="7" height="3" fill="#0b3c8f"/><rect x="9" y="4" width="2" height="2" fill="#a8dcff"/><rect x="12" y="4" width="2" height="2" fill="#a8dcff"/><rect x="6" y="7" width="2" height="2" fill="#a8dcff"/><rect x="9" y="7" width="2" height="2" fill="#a8dcff"/><rect x="12" y="7" width="2" height="2" fill="#a8dcff"/><rect x="6" y="10" width="2" height="2" fill="#a8dcff"/><rect x="9" y="10" width="2" height="2" fill="#a8dcff"/><rect x="12" y="10" width="2" height="2" fill="#a8dcff"/></g><g shape-rendering="crispEdges"><rect x="4" y="1" width="1" height="1" fill="#0b3c8f"/><rect x="3" y="2" width="1" height="1" fill="#0b3c8f"/><rect x="4" y="2" width="1" height="1" fill="#a8dcff"/><rect x="5" y="2" width="1" height="1" fill="#0b3c8f"/><rect x="2" y="3" width="1" height="1" fill="#0b3c8f"/><rect x="3" y="3" width="1" height="1" fill="#a8dcff"/><rect x="4" y="3" width="1" height="1" fill="#a8dcff"/><rect x="5" y="3" width="1" height="1" fill="#a8dcff"/><rect x="6" y="3" width="1" height="1" fill="#0b3c8f"/><rect x="3" y="4" width="1" height="1" fill="#0b3c8f"/><rect x="4" y="4" width="1" height="1" fill="#a8dcff"/><rect x="5" y="4" width="1" height="1" fill="#0b3c8f"/><rect x="4" y="5" width="1" height="1" fill="#0b3c8f"/></g></svg><div class="t" style="left:290px;top:375px;font-size:11px;color:#2b2b2b;line-height:14px;letter-spacing:-0.067px;">Link</div><svg class="a" style="left:258px;top:391px" width="18" height="18" viewBox="0 0 18 18" ><g shape-rendering="crispEdges"><rect x="6" y="13" width="10" height="1" fill="#d6d2b0"/><rect x="15" y="4" width="1" height="10" fill="#d6d2b0"/><rect x="5" y="6" width="10" height="7" fill="#0b3c8f"/><rect x="8" y="3" width="7" height="3" fill="#0b3c8f"/><rect x="9" y="4" width="2" height="2" fill="#a8dcff"/><rect x="12" y="4" width="2" height="2" fill="#a8dcff"/><rect x="6" y="7" width="2" height="2" fill="#a8dcff"/><rect x="9" y="7" width="2" height="2" fill="#a8dcff"/><rect x="12" y="7" width="2" height="2" fill="#a8dcff"/><rect x="6" y="10" width="2" height="2" fill="#a8dcff"/><rect x="9" y="10" width="2" height="2" fill="#a8dcff"/><rect x="12" y="10" width="2" height="2" fill="#a8dcff"/></g><g shape-rendering="crispEdges"><rect x="4" y="1" width="1" height="1" fill="#0b3c8f"/><rect x="3" y="2" width="1" height="1" fill="#0b3c8f"/><rect x="4" y="2" width="1" height="1" fill="#a8dcff"/><rect x="5" y="2" width="1" height="1" fill="#0b3c8f"/><rect x="2" y="3" width="1" height="1" fill="#0b3c8f"/><rect x="3" y="3" width="1" height="1" fill="#a8dcff"/><rect x="4" y="3" width="1" height="1" fill="#a8dcff"/><rect x="5" y="3" width="1" height="1" fill="#a8dcff"/><rect x="6" y="3" width="1" height="1" fill="#0b3c8f"/><rect x="3" y="4" width="1" height="1" fill="#0b3c8f"/><rect x="4" y="4" width="1" height="1" fill="#a8dcff"/><rect x="5" y="4" width="1" height="1" fill="#0b3c8f"/><rect x="4" y="5" width="1" height="1" fill="#0b3c8f"/></g></svg><div class="t" style="left:290px;top:394px;font-size:11px;color:#2b2b2b;line-height:14px;letter-spacing:-0.200px;">List</div><svg class="a" style="left:258px;top:410px" width="18" height="18" viewBox="0 0 18 18" ><g shape-rendering="crispEdges"><rect x="6" y="13" width="10" height="1" fill="#d6d2b0"/><rect x="15" y="4" width="1" height="10" fill="#d6d2b0"/><rect x="5" y="6" width="10" height="7" fill="#0b3c8f"/><rect x="8" y="3" width="7" height="3" fill="#0b3c8f"/><rect x="9" y="4" width="2" height="2" fill="#a8dcff"/><rect x="12" y="4" width="2" height="2" fill="#a8dcff"/><rect x="6" y="7" width="2" height="2" fill="#a8dcff"/><rect x="9" y="7" width="2" height="2" fill="#a8dcff"/><rect x="12" y="7" width="2" height="2" fill="#a8dcff"/><rect x="6" y="10" width="2" height="2" fill="#a8dcff"/><rect x="9" y="10" width="2" height="2" fill="#a8dcff"/><rect x="12" y="10" width="2" height="2" fill="#a8dcff"/></g><g shape-rendering="crispEdges"><rect x="4" y="1" width="1" height="1" fill="#0b3c8f"/><rect x="3" y="2" width="1" height="1" fill="#0b3c8f"/><rect x="4" y="2" width="1" height="1" fill="#a8dcff"/><rect x="5" y="2" width="1" height="1" fill="#0b3c8f"/><rect x="2" y="3" width="1" height="1" fill="#0b3c8f"/><rect x="3" y="3" width="1" height="1" fill="#a8dcff"/><rect x="4" y="3" width="1" height="1" fill="#a8dcff"/><rect x="5" y="3" width="1" height="1" fill="#a8dcff"/><rect x="6" y="3" width="1" height="1" fill="#0b3c8f"/><rect x="3" y="4" width="1" height="1" fill="#0b3c8f"/><rect x="4" y="4" width="1" height="1" fill="#a8dcff"/><rect x="5" y="4" width="1" height="1" fill="#0b3c8f"/><rect x="4" y="5" width="1" height="1" fill="#0b3c8f"/></g></svg><div class="t" style="left:290px;top:413px;font-size:11px;color:#2b2b2b;line-height:14px;letter-spacing:-0.311px;">Page Break</div><svg class="a" style="left:258px;top:429px" width="18" height="18" viewBox="0 0 18 18" ><g shape-rendering="crispEdges"><rect x="6" y="13" width="10" height="1" fill="#d6d2b0"/><rect x="15" y="4" width="1" height="10" fill="#d6d2b0"/><rect x="5" y="6" width="10" height="7" fill="#0b3c8f"/><rect x="8" y="3" width="7" height="3" fill="#0b3c8f"/><rect x="9" y="4" width="2" height="2" fill="#a8dcff"/><rect x="12" y="4" width="2" height="2" fill="#a8dcff"/><rect x="6" y="7" width="2" height="2" fill="#a8dcff"/><rect x="9" y="7" width="2" height="2" fill="#a8dcff"/><rect x="12" y="7" width="2" height="2" fill="#a8dcff"/><rect x="6" y="10" width="2" height="2" fill="#a8dcff"/><rect x="9" y="10" width="2" height="2" fill="#a8dcff"/><rect x="12" y="10" width="2" height="2" fill="#a8dcff"/></g><g shape-rendering="crispEdges"><rect x="4" y="1" width="1" height="1" fill="#0b3c8f"/><rect x="3" y="2" width="1" height="1" fill="#0b3c8f"/><rect x="4" y="2" width="1" height="1" fill="#a8dcff"/><rect x="5" y="2" width="1" height="1" fill="#0b3c8f"/><rect x="2" y="3" width="1" height="1" fill="#0b3c8f"/><rect x="3" y="3" width="1" height="1" fill="#a8dcff"/><rect x="4" y="3" width="1" height="1" fill="#a8dcff"/><rect x="5" y="3" width="1" height="1" fill="#a8dcff"/><rect x="6" y="3" width="1" height="1" fill="#0b3c8f"/><rect x="3" y="4" width="1" height="1" fill="#0b3c8f"/><rect x="4" y="4" width="1" height="1" fill="#a8dcff"/><rect x="5" y="4" width="1" height="1" fill="#0b3c8f"/><rect x="4" y="5" width="1" height="1" fill="#0b3c8f"/></g></svg><div class="t" style="left:290px;top:432px;font-size:11px;color:#2b2b2b;line-height:14px;letter-spacing:-0.100px;">Paragraph</div><svg class="a" style="left:258px;top:448px" width="18" height="18" viewBox="0 0 18 18" ><g shape-rendering="crispEdges"><rect x="6" y="13" width="10" height="1" fill="#d6d2b0"/><rect x="15" y="4" width="1" height="10" fill="#d6d2b0"/><rect x="5" y="6" width="10" height="7" fill="#0b3c8f"/><rect x="8" y="3" width="7" height="3" fill="#0b3c8f"/><rect x="9" y="4" width="2" height="2" fill="#a8dcff"/><rect x="12" y="4" width="2" height="2" fill="#a8dcff"/><rect x="6" y="7" width="2" height="2" fill="#a8dcff"/><rect x="9" y="7" width="2" height="2" fill="#a8dcff"/><rect x="12" y="7" width="2" height="2" fill="#a8dcff"/><rect x="6" y="10" width="2" height="2" fill="#a8dcff"/><rect x="9" y="10" width="2" height="2" fill="#a8dcff"/><rect x="12" y="10" width="2" height="2" fill="#a8dcff"/></g><g shape-rendering="crispEdges"><rect x="4" y="1" width="1" height="1" fill="#0b3c8f"/><rect x="3" y="2" width="1" height="1" fill="#0b3c8f"/><rect x="4" y="2" width="1" height="1" fill="#a8dcff"/><rect x="5" y="2" width="1" height="1" fill="#0b3c8f"/><rect x="2" y="3" width="1" height="1" fill="#0b3c8f"/><rect x="3" y="3" width="1" height="1" fill="#a8dcff"/><rect x="4" y="3" width="1" height="1" fill="#a8dcff"/><rect x="5" y="3" width="1" height="1" fill="#a8dcff"/><rect x="6" y="3" width="1" height="1" fill="#0b3c8f"/><rect x="3" y="4" width="1" height="1" fill="#0b3c8f"/><rect x="4" y="4" width="1" height="1" fill="#a8dcff"/><rect x="5" y="4" width="1" height="1" fill="#0b3c8f"/><rect x="4" y="5" width="1" height="1" fill="#0b3c8f"/></g></svg><div class="t" style="left:290px;top:451px;font-size:11px;color:#2b2b2b;line-height:14px;letter-spacing:0.191px;">Preformatted</div><svg class="a" style="left:258px;top:467px" width="18" height="18" viewBox="0 0 18 18" ><g shape-rendering="crispEdges"><rect x="6" y="13" width="10" height="1" fill="#d6d2b0"/><rect x="15" y="4" width="1" height="10" fill="#d6d2b0"/><rect x="5" y="6" width="10" height="7" fill="#0b3c8f"/><rect x="8" y="3" width="7" height="3" fill="#0b3c8f"/><rect x="9" y="4" width="2" height="2" fill="#a8dcff"/><rect x="12" y="4" width="2" height="2" fill="#a8dcff"/><rect x="6" y="7" width="2" height="2" fill="#a8dcff"/><rect x="9" y="7" width="2" height="2" fill="#a8dcff"/><rect x="12" y="7" width="2" height="2" fill="#a8dcff"/><rect x="6" y="10" width="2" height="2" fill="#a8dcff"/><rect x="9" y="10" width="2" height="2" fill="#a8dcff"/><rect x="12" y="10" width="2" height="2" fill="#a8dcff"/></g><g shape-rendering="crispEdges"><rect x="4" y="1" width="1" height="1" fill="#0b3c8f"/><rect x="3" y="2" width="1" height="1" fill="#0b3c8f"/><rect x="4" y="2" width="1" height="1" fill="#a8dcff"/><rect x="5" y="2" width="1" height="1" fill="#0b3c8f"/><rect x="2" y="3" width="1" height="1" fill="#0b3c8f"/><rect x="3" y="3" width="1" height="1" fill="#a8dcff"/><rect x="4" y="3" width="1" height="1" fill="#a8dcff"/><rect x="5" y="3" width="1" height="1" fill="#a8dcff"/><rect x="6" y="3" width="1" height="1" fill="#0b3c8f"/><rect x="3" y="4" width="1" height="1" fill="#0b3c8f"/><rect x="4" y="4" width="1" height="1" fill="#a8dcff"/><rect x="5" y="4" width="1" height="1" fill="#0b3c8f"/><rect x="4" y="5" width="1" height="1" fill="#0b3c8f"/></g></svg><div class="t" style="left:290px;top:470px;font-size:11px;color:#2b2b2b;line-height:14px;letter-spacing:-0.133px;">Text</div><svg class="a" style="left:258px;top:486px" width="18" height="18" viewBox="0 0 18 18" ><g shape-rendering="crispEdges"><rect x="6" y="13" width="10" height="1" fill="#d6d2b0"/><rect x="15" y="4" width="1" height="10" fill="#d6d2b0"/><rect x="5" y="6" width="10" height="7" fill="#0b3c8f"/><rect x="8" y="3" width="7" height="3" fill="#0b3c8f"/><rect x="9" y="4" width="2" height="2" fill="#a8dcff"/><rect x="12" y="4" width="2" height="2" fill="#a8dcff"/><rect x="6" y="7" width="2" height="2" fill="#a8dcff"/><rect x="9" y="7" width="2" height="2" fill="#a8dcff"/><rect x="12" y="7" width="2" height="2" fill="#a8dcff"/><rect x="6" y="10" width="2" height="2" fill="#a8dcff"/><rect x="9" y="10" width="2" height="2" fill="#a8dcff"/><rect x="12" y="10" width="2" height="2" fill="#a8dcff"/></g><g shape-rendering="crispEdges"><rect x="4" y="1" width="1" height="1" fill="#0b3c8f"/><rect x="3" y="2" width="1" height="1" fill="#0b3c8f"/><rect x="4" y="2" width="1" height="1" fill="#a8dcff"/><rect x="5" y="2" width="1" height="1" fill="#0b3c8f"/><rect x="2" y="3" width="1" height="1" fill="#0b3c8f"/><rect x="3" y="3" width="1" height="1" fill="#a8dcff"/><rect x="4" y="3" width="1" height="1" fill="#a8dcff"/><rect x="5" y="3" width="1" height="1" fill="#a8dcff"/><rect x="6" y="3" width="1" height="1" fill="#0b3c8f"/><rect x="3" y="4" width="1" height="1" fill="#0b3c8f"/><rect x="4" y="4" width="1" height="1" fill="#a8dcff"/><rect x="5" y="4" width="1" height="1" fill="#0b3c8f"/><rect x="4" y="5" width="1" height="1" fill="#0b3c8f"/></g></svg><div class="t" style="left:290px;top:489px;font-size:11px;color:#2b2b2b;line-height:14px;letter-spacing:-0.033px;">Title Page</div><svg class="a" style="left:258px;top:505px" width="18" height="18" viewBox="0 0 18 18" ><defs><linearGradient id="fg" x1="0" y1="0" x2="0" y2="1"><stop offset="0" stop-color="#ffeb94"/><stop offset="1" stop-color="#fbcf3c"/></linearGradient></defs><path d="M4 15.5 H16" stroke="#dcd6bc" stroke-width="1"/><path d="M2.6 14.4 V5 L3.9 3.6 H7.6 L9.2 5.4 H14.8 V14.4 Z" fill="#fff6d0" stroke="#d49e0e" stroke-width="1.25"/><path d="M2.8 14.4 L5.2 7.9 H15.4 Q16.5 7.9 16.5 9.2 V13.2 Q16.5 14.4 15.3 14.4 Z" fill="url(#fg)" stroke="#c99206" stroke-width="1.25" stroke-linejoin="round"/><path d="M6 8.9 H15.5" stroke="#fffbe0" stroke-width="0.8"/></svg><div class="a" style="left:282px;top:516px;width:3px;height:1px;background:#3a3a3a"></div><div class="t" style="left:291px;top:508px;font-size:11px;color:#2b2b2b;line-height:14px;letter-spacing:-0.050px;">Formatting Tables</div><div class="a" style="left:384px;top:516px;width:59px;height:1px;background:repeating-linear-gradient(90deg,#303030 0 3px,transparent 3px 4px)"></div><svg class="a" style="left:258px;top:524px" width="18" height="18" viewBox="0 0 18 18" ><g shape-rendering="crispEdges"><rect x="6" y="13" width="10" height="1" fill="#d6d2b0"/><rect x="15" y="4" width="1" height="10" fill="#d6d2b0"/><rect x="5" y="6" width="10" height="7" fill="#0b3c8f"/><rect x="8" y="3" width="7" height="3" fill="#0b3c8f"/><rect x="9" y="4" width="2" height="2" fill="#a8dcff"/><rect x="12" y="4" width="2" height="2" fill="#a8dcff"/><rect x="6" y="7" width="2" height="2" fill="#a8dcff"/><rect x="9" y="7" width="2" height="2" fill="#a8dcff"/><rect x="12" y="7" width="2" height="2" fill="#a8dcff"/><rect x="6" y="10" width="2" height="2" fill="#a8dcff"/><rect x="9" y="10" width="2" height="2" fill="#a8dcff"/><rect x="12" y="10" width="2" height="2" fill="#a8dcff"/></g><g shape-rendering="crispEdges"><rect x="4" y="1" width="1" height="1" fill="#0b3c8f"/><rect x="3" y="2" width="1" height="1" fill="#0b3c8f"/><rect x="4" y="2" width="1" height="1" fill="#a8dcff"/><rect x="5" y="2" width="1" height="1" fill="#0b3c8f"/><rect x="2" y="3" width="1" height="1" fill="#0b3c8f"/><rect x="3" y="3" width="1" height="1" fill="#a8dcff"/><rect x="4" y="3" width="1" height="1" fill="#a8dcff"/><rect x="5" y="3" width="1" height="1" fill="#a8dcff"/><rect x="6" y="3" width="1" height="1" fill="#0b3c8f"/><rect x="3" y="4" width="1" height="1" fill="#0b3c8f"/><rect x="4" y="4" width="1" height="1" fill="#a8dcff"/><rect x="5" y="4" width="1" height="1" fill="#0b3c8f"/><rect x="4" y="5" width="1" height="1" fill="#0b3c8f"/></g></svg><div class="t" style="left:290px;top:527px;font-size:11px;color:#2b2b2b;line-height:14px;letter-spacing:-0.225px;">Table</div><svg class="a" style="left:258px;top:543px" width="18" height="18" viewBox="0 0 18 18" ><g shape-rendering="crispEdges"><rect x="6" y="13" width="10" height="1" fill="#d6d2b0"/><rect x="15" y="4" width="1" height="10" fill="#d6d2b0"/><rect x="5" y="6" width="10" height="7" fill="#0b3c8f"/><rect x="8" y="3" width="7" height="3" fill="#0b3c8f"/><rect x="9" y="4" width="2" height="2" fill="#a8dcff"/><rect x="12" y="4" width="2" height="2" fill="#a8dcff"/><rect x="6" y="7" width="2" height="2" fill="#a8dcff"/><rect x="9" y="7" width="2" height="2" fill="#a8dcff"/><rect x="12" y="7" width="2" height="2" fill="#a8dcff"/><rect x="6" y="10" width="2" height="2" fill="#a8dcff"/><rect x="9" y="10" width="2" height="2" fill="#a8dcff"/><rect x="12" y="10" width="2" height="2" fill="#a8dcff"/></g><g shape-rendering="crispEdges"><rect x="4" y="1" width="1" height="1" fill="#0b3c8f"/><rect x="3" y="2" width="1" height="1" fill="#0b3c8f"/><rect x="4" y="2" width="1" height="1" fill="#a8dcff"/><rect x="5" y="2" width="1" height="1" fill="#0b3c8f"/><rect x="2" y="3" width="1" height="1" fill="#0b3c8f"/><rect x="3" y="3" width="1" height="1" fill="#a8dcff"/><rect x="4" y="3" width="1" height="1" fill="#a8dcff"/><rect x="5" y="3" width="1" height="1" fill="#a8dcff"/><rect x="6" y="3" width="1" height="1" fill="#0b3c8f"/><rect x="3" y="4" width="1" height="1" fill="#0b3c8f"/><rect x="4" y="4" width="1" height="1" fill="#a8dcff"/><rect x="5" y="4" width="1" height="1" fill="#0b3c8f"/><rect x="4" y="5" width="1" height="1" fill="#0b3c8f"/></g></svg><div class="t" style="left:290px;top:546px;font-size:11px;color:#2b2b2b;line-height:14px;letter-spacing:-0.311px;">Table Body</div><svg class="a" style="left:258px;top:562px" width="18" height="18" viewBox="0 0 18 18" ><g shape-rendering="crispEdges"><rect x="6" y="13" width="10" height="1" fill="#d6d2b0"/><rect x="15" y="4" width="1" height="10" fill="#d6d2b0"/><rect x="5" y="6" width="10" height="7" fill="#0b3c8f"/><rect x="8" y="3" width="7" height="3" fill="#0b3c8f"/><rect x="9" y="4" width="2" height="2" fill="#a8dcff"/><rect x="12" y="4" width="2" height="2" fill="#a8dcff"/><rect x="6" y="7" width="2" height="2" fill="#a8dcff"/><rect x="9" y="7" width="2" height="2" fill="#a8dcff"/><rect x="12" y="7" width="2" height="2" fill="#a8dcff"/><rect x="6" y="10" width="2" height="2" fill="#a8dcff"/><rect x="9" y="10" width="2" height="2" fill="#a8dcff"/><rect x="12" y="10" width="2" height="2" fill="#a8dcff"/></g><g shape-rendering="crispEdges"><rect x="4" y="1" width="1" height="1" fill="#0b3c8f"/><rect x="3" y="2" width="1" height="1" fill="#0b3c8f"/><rect x="4" y="2" width="1" height="1" fill="#a8dcff"/><rect x="5" y="2" width="1" height="1" fill="#0b3c8f"/><rect x="2" y="3" width="1" height="1" fill="#0b3c8f"/><rect x="3" y="3" width="1" height="1" fill="#a8dcff"/><rect x="4" y="3" width="1" height="1" fill="#a8dcff"/><rect x="5" y="3" width="1" height="1" fill="#a8dcff"/><rect x="6" y="3" width="1" height="1" fill="#0b3c8f"/><rect x="3" y="4" width="1" height="1" fill="#0b3c8f"/><rect x="4" y="4" width="1" height="1" fill="#a8dcff"/><rect x="5" y="4" width="1" height="1" fill="#0b3c8f"/><rect x="4" y="5" width="1" height="1" fill="#0b3c8f"/></g></svg><div class="t" style="left:290px;top:565px;font-size:11px;color:#2b2b2b;line-height:14px;letter-spacing:-0.256px;">Table Column Spec</div><svg class="a" style="left:258px;top:581px" width="18" height="18" viewBox="0 0 18 18" ><g shape-rendering="crispEdges"><rect x="6" y="13" width="10" height="1" fill="#d6d2b0"/><rect x="15" y="4" width="1" height="10" fill="#d6d2b0"/><rect x="5" y="6" width="10" height="7" fill="#0b3c8f"/><rect x="8" y="3" width="7" height="3" fill="#0b3c8f"/><rect x="9" y="4" width="2" height="2" fill="#a8dcff"/><rect x="12" y="4" width="2" height="2" fill="#a8dcff"/><rect x="6" y="7" width="2" height="2" fill="#a8dcff"/><rect x="9" y="7" width="2" height="2" fill="#a8dcff"/><rect x="12" y="7" width="2" height="2" fill="#a8dcff"/><rect x="6" y="10" width="2" height="2" fill="#a8dcff"/><rect x="9" y="10" width="2" height="2" fill="#a8dcff"/><rect x="12" y="10" width="2" height="2" fill="#a8dcff"/></g><g shape-rendering="crispEdges"><rect x="4" y="1" width="1" height="1" fill="#0b3c8f"/><rect x="3" y="2" width="1" height="1" fill="#0b3c8f"/><rect x="4" y="2" width="1" height="1" fill="#a8dcff"/><rect x="5" y="2" width="1" height="1" fill="#0b3c8f"/><rect x="2" y="3" width="1" height="1" fill="#0b3c8f"/><rect x="3" y="3" width="1" height="1" fill="#a8dcff"/><rect x="4" y="3" width="1" height="1" fill="#a8dcff"/><rect x="5" y="3" width="1" height="1" fill="#a8dcff"/><rect x="6" y="3" width="1" height="1" fill="#0b3c8f"/><rect x="3" y="4" width="1" height="1" fill="#0b3c8f"/><rect x="4" y="4" width="1" height="1" fill="#a8dcff"/><rect x="5" y="4" width="1" height="1" fill="#0b3c8f"/><rect x="4" y="5" width="1" height="1" fill="#0b3c8f"/></g></svg><div class="t" style="left:290px;top:584px;font-size:11px;color:#2b2b2b;line-height:14px;letter-spacing:-0.180px;">Table Entry</div><svg class="a" style="left:258px;top:600px" width="18" height="18" viewBox="0 0 18 18" ><g shape-rendering="crispEdges"><rect x="6" y="13" width="10" height="1" fill="#d6d2b0"/><rect x="15" y="4" width="1" height="10" fill="#d6d2b0"/><rect x="5" y="6" width="10" height="7" fill="#0b3c8f"/><rect x="8" y="3" width="7" height="3" fill="#0b3c8f"/><rect x="9" y="4" width="2" height="2" fill="#a8dcff"/><rect x="12" y="4" width="2" height="2" fill="#a8dcff"/><rect x="6" y="7" width="2" height="2" fill="#a8dcff"/><rect x="9" y="7" width="2" height="2" fill="#a8dcff"/><rect x="12" y="7" width="2" height="2" fill="#a8dcff"/><rect x="6" y="10" width="2" height="2" fill="#a8dcff"/><rect x="9" y="10" width="2" height="2" fill="#a8dcff"/><rect x="12" y="10" width="2" height="2" fill="#a8dcff"/></g><g shape-rendering="crispEdges"><rect x="4" y="1" width="1" height="1" fill="#0b3c8f"/><rect x="3" y="2" width="1" height="1" fill="#0b3c8f"/><rect x="4" y="2" width="1" height="1" fill="#a8dcff"/><rect x="5" y="2" width="1" height="1" fill="#0b3c8f"/><rect x="2" y="3" width="1" height="1" fill="#0b3c8f"/><rect x="3" y="3" width="1" height="1" fill="#a8dcff"/><rect x="4" y="3" width="1" height="1" fill="#a8dcff"/><rect x="5" y="3" width="1" height="1" fill="#a8dcff"/><rect x="6" y="3" width="1" height="1" fill="#0b3c8f"/><rect x="3" y="4" width="1" height="1" fill="#0b3c8f"/><rect x="4" y="4" width="1" height="1" fill="#a8dcff"/><rect x="5" y="4" width="1" height="1" fill="#0b3c8f"/><rect x="4" y="5" width="1" height="1" fill="#0b3c8f"/></g></svg><div class="t" style="left:290px;top:603px;font-size:11px;color:#2b2b2b;line-height:14px;letter-spacing:-0.100px;">Table Footer</div><svg class="a" style="left:258px;top:619px" width="18" height="18" viewBox="0 0 18 18" ><g shape-rendering="crispEdges"><rect x="6" y="13" width="10" height="1" fill="#d6d2b0"/><rect x="15" y="4" width="1" height="10" fill="#d6d2b0"/><rect x="5" y="6" width="10" height="7" fill="#0b3c8f"/><rect x="8" y="3" width="7" height="3" fill="#0b3c8f"/><rect x="9" y="4" width="2" height="2" fill="#a8dcff"/><rect x="12" y="4" width="2" height="2" fill="#a8dcff"/><rect x="6" y="7" width="2" height="2" fill="#a8dcff"/><rect x="9" y="7" width="2" height="2" fill="#a8dcff"/><rect x="12" y="7" width="2" height="2" fill="#a8dcff"/><rect x="6" y="10" width="2" height="2" fill="#a8dcff"/><rect x="9" y="10" width="2" height="2" fill="#a8dcff"/><rect x="12" y="10" width="2" height="2" fill="#a8dcff"/></g><g shape-rendering="crispEdges"><rect x="4" y="1" width="1" height="1" fill="#0b3c8f"/><rect x="3" y="2" width="1" height="1" fill="#0b3c8f"/><rect x="4" y="2" width="1" height="1" fill="#a8dcff"/><rect x="5" y="2" width="1" height="1" fill="#0b3c8f"/><rect x="2" y="3" width="1" height="1" fill="#0b3c8f"/><rect x="3" y="3" width="1" height="1" fill="#a8dcff"/><rect x="4" y="3" width="1" height="1" fill="#a8dcff"/><rect x="5" y="3" width="1" height="1" fill="#a8dcff"/><rect x="6" y="3" width="1" height="1" fill="#0b3c8f"/><rect x="3" y="4" width="1" height="1" fill="#0b3c8f"/><rect x="4" y="4" width="1" height="1" fill="#a8dcff"/><rect x="5" y="4" width="1" height="1" fill="#0b3c8f"/><rect x="4" y="5" width="1" height="1" fill="#0b3c8f"/></g></svg><div class="t" style="left:290px;top:622px;font-size:11px;color:#2b2b2b;line-height:14px;letter-spacing:-0.064px;">Table Header</div><svg class="a" style="left:258px;top:638px" width="18" height="18" viewBox="0 0 18 18" ><g shape-rendering="crispEdges"><rect x="6" y="13" width="10" height="1" fill="#d6d2b0"/><rect x="15" y="4" width="1" height="10" fill="#d6d2b0"/><rect x="5" y="6" width="10" height="7" fill="#0b3c8f"/><rect x="8" y="3" width="7" height="3" fill="#0b3c8f"/><rect x="9" y="4" width="2" height="2" fill="#a8dcff"/><rect x="12" y="4" width="2" height="2" fill="#a8dcff"/><rect x="6" y="7" width="2" height="2" fill="#a8dcff"/><rect x="9" y="7" width="2" height="2" fill="#a8dcff"/><rect x="12" y="7" width="2" height="2" fill="#a8dcff"/><rect x="6" y="10" width="2" height="2" fill="#a8dcff"/><rect x="9" y="10" width="2" height="2" fill="#a8dcff"/><rect x="12" y="10" width="2" height="2" fill="#a8dcff"/></g><g shape-rendering="crispEdges"><rect x="4" y="1" width="1" height="1" fill="#0b3c8f"/><rect x="3" y="2" width="1" height="1" fill="#0b3c8f"/><rect x="4" y="2" width="1" height="1" fill="#a8dcff"/><rect x="5" y="2" width="1" height="1" fill="#0b3c8f"/><rect x="2" y="3" width="1" height="1" fill="#0b3c8f"/><rect x="3" y="3" width="1" height="1" fill="#a8dcff"/><rect x="4" y="3" width="1" height="1" fill="#a8dcff"/><rect x="5" y="3" width="1" height="1" fill="#a8dcff"/><rect x="6" y="3" width="1" height="1" fill="#0b3c8f"/><rect x="3" y="4" width="1" height="1" fill="#0b3c8f"/><rect x="4" y="4" width="1" height="1" fill="#a8dcff"/><rect x="5" y="4" width="1" height="1" fill="#0b3c8f"/><rect x="4" y="5" width="1" height="1" fill="#0b3c8f"/></g></svg></div><div class="a" style="left:456px;top:83px;width:16px;height:562px;background:#f0f0f0"></div><div class="a" style="left:257px;top:645px;width:215px;height:16px;background:#f0f0f0"></div><div class="a" style="left:463px;top:100px;width:2px;height:248px;background:#858585"></div><div class="a" style="left:274px;top:652px;width:159px;height:2px;background:#858585"></div>
<div class="a" style="left:251px;top:361px;width:2px;height:18px;background:repeating-linear-gradient(#aaa 0 2px,transparent 2px 4px)"></div><div class="a" style="left:476px;top:361px;width:2px;height:18px;background:repeating-linear-gradient(#a4a4a4 0 2px,transparent 2px 4px)"></div>
<div class="t" style="left:490px;top:87px;font-size:11.5px;color:#000;line-height:14px;letter-spacing:0.138px;font-weight:bold">Report Options</div><div class="a" style="left:926px;top:107px;width:1px;height:513px;background:#fff"></div><div class="a" style="left:934px;top:124px;width:2px;height:398px;background:#858585"></div><div class="a" style="left:492px;top:116px;width:432px;height:187px;border:1px solid #dcdcdc"></div><div class="a" style="left:499px;top:114px;width:100.20000000000005px;height:5px;background:#f0f0f0"></div><div class="t" style="left:501px;top:109px;font-size:11px;color:#000;line-height:14px;letter-spacing:0.032px;">Report File Location</div><div class="t" style="left:501px;top:136px;font-size:11px;color:#000;line-height:14px;letter-spacing:0.003px;">C:\user\Documents\magic_square.zip</div><div class="a" style="left:841px;top:133px;width:73px;height:21px;background:#f8f8f8;border:1px solid #e6e6e6;border-radius:4px"></div><div class="t" style="left:841px;top:137px;font-size:11px;color:#8a8a8a;line-height:14px;letter-spacing:0.267px;width:73px;text-align:center;">View...</div><div class="t" style="left:501px;top:165px;font-size:11px;color:#000;line-height:14px;letter-spacing:0.122px;">Directory:</div><div class="a" style="left:556px;top:162px;width:152px;height:20px;background:#fdfdfd;border:1px solid #d6d6d6;border-bottom-color:#b8b8b8;border-radius:3px"></div><div class="t" style="left:560px;top:165px;font-size:11px;color:#000;line-height:14px;letter-spacing:0.033px;">Present working directory</div><svg class="a" style="left:695px;top:170px" width="10" height="6" viewBox="0 0 10 6"><path d="M0.5 0.7 L4.5 4.6 L8.5 0.7" fill="none" stroke="#3a3a3a" stroke-width="1"/></svg><div class="a" style="left:715px;top:163px;width:118px;height:19px;background:#f0f0f0;border:1px solid #e2e2e2;box-shadow:inset 0 0 0 1px #fafafa"></div><div class="a" style="left:841px;top:162px;width:73px;height:20px;background:#f8f8f8;border:1px solid #e6e6e6;border-radius:4px"></div><div class="t" style="left:841px;top:167px;font-size:11px;color:#8a8a8a;line-height:14px;width:73px;text-align:center;">...</div><div class="t" style="left:501px;top:194px;font-size:11px;color:#000;line-height:14px;letter-spacing:0.188px;">Filename:</div><div class="a" style="left:556px;top:191px;width:152px;height:20px;background:#fdfdfd;border:1px solid #d6d6d6;border-bottom-color:#b8b8b8;border-radius:3px"></div><div class="t" style="left:560px;top:194px;font-size:11px;color:#000;line-height:14px;">Same as setup file</div><svg class="a" style="left:695px;top:199px" width="10" height="6" viewBox="0 0 10 6"><path d="M0.5 0.7 L4.5 4.6 L8.5 0.7" fill="none" stroke="#3a3a3a" stroke-width="1"/></svg><div class="a" style="left:715px;top:192px;width:118px;height:19px;background:#f0f0f0;border:1px solid #e2e2e2;box-shadow:inset 0 0 0 1px #fafafa"></div><div class="t" style="left:717px;top:194px;font-size:11px;color:#757575;line-height:14px;">index</div><div class="a" style="left:841px;top:191px;width:73px;height:20px;background:#f8f8f8;border:1px solid #e6e6e6;border-radius:4px"></div><div class="t" style="left:841px;top:196px;font-size:11px;color:#8a8a8a;line-height:14px;width:73px;text-align:center;">...</div><div class="a" style="left:501px;top:221px;width:13px;height:13px;background:#f4f4f4;border:1px solid #626262;border-radius:3px"></div><div class="t" style="left:519px;top:221px;font-size:11px;color:#000;line-height:14px;letter-spacing:0.119px;">If report already exists, increment to prevent overwriting</div><div class="a" style="left:501px;top:250px;width:414px;height:44px;border:1px solid #dcdcdc"></div><div class="a" style="left:508px;top:248px;width:66.60000000000002px;height:5px;background:#f0f0f0"></div><div class="t" style="left:510px;top:243px;font-size:11px;color:#000;line-height:14px;letter-spacing:-0.109px;">Package type</div><div class="a" style="left:511px;top:269px;width:13px;height:13px;border:1px solid #626262;border-radius:50%;background:#f4f4f4"></div><div class="t" style="left:530px;top:269px;font-size:11px;color:#000;line-height:14px;letter-spacing:-0.100px;">Zipped</div><div class="a" style="left:634px;top:269px;width:13px;height:13px;border:1px solid #626262;border-radius:50%;background:#f4f4f4"></div><div class="t" style="left:653px;top:269px;font-size:11px;color:#000;line-height:14px;letter-spacing:-0.143px;">Unzipped</div><div class="a" style="left:757px;top:269px;width:13px;height:13px;border:1px solid #626262;border-radius:50%;background:#f4f4f4"></div><div class="t" style="left:777px;top:269px;font-size:11px;color:#000;line-height:14px;letter-spacing:-0.070px;">Both zipped and unzipped</div><div class="a" style="left:492px;top:317px;width:432px;height:48px;border:1px solid #dcdcdc"></div><div class="a" style="left:499px;top:315px;width:170.5px;height:5px;background:#f0f0f0"></div><div class="t" style="left:501px;top:310px;font-size:11px;color:#000;line-height:14px;letter-spacing:-0.048px;">Report Output Type and Templates</div><div class="t" style="left:503px;top:338px;font-size:11px;color:#000;line-height:14px;letter-spacing:0.345px;">File format:</div><div class="a" style="left:567px;top:335px;width:199px;height:20px;background:#fdfdfd;border:1px solid #d6d6d6;border-bottom-color:#b8b8b8;border-radius:3px"></div><div class="t" style="left:571px;top:338px;font-size:11px;color:#000;line-height:14px;letter-spacing:0.042px;">HTML (from template)</div><svg class="a" style="left:753px;top:343px" width="10" height="6" viewBox="0 0 10 6"><path d="M0.5 0.7 L4.5 4.6 L8.5 0.7" fill="none" stroke="#3a3a3a" stroke-width="1"/></svg><div class="a" style="left:774px;top:335px;width:141px;height:20px;background:#fdfdfd;border:1px solid #d6d6d6;border-bottom-color:#b8b8b8;border-radius:3px"></div><div class="t" style="left:778px;top:338px;font-size:11px;color:#000;line-height:14px;letter-spacing:-0.100px;">Default HTML Template</div><svg class="a" style="left:902px;top:343px" width="10" height="6" viewBox="0 0 10 6"><path d="M0.5 0.7 L4.5 4.6 L8.5 0.7" fill="none" stroke="#3a3a3a" stroke-width="1"/></svg><div class="a" style="left:492px;top:379px;width:432px;height:120px;border:1px solid #dcdcdc"></div><div class="a" style="left:499px;top:377px;width:97.39999999999998px;height:5px;background:#f0f0f0"></div><div class="t" style="left:501px;top:372px;font-size:11px;color:#000;line-height:14px;letter-spacing:-0.047px;">Generation Options</div><div class="a" style="left:501px;top:397px;width:13px;height:13px;background:#005fb8;border-radius:3px"></div><svg class="a" style="left:501px;top:397px" width="13" height="13" viewBox="0 0 13 13"><path d="M3.6 6.7 L5.6 8.6 L9.6 4.4" fill="none" stroke="#fff" stroke-width="1"/></svg><div class="t" style="left:519px;top:397px;font-size:11px;color:#000;line-height:14px;letter-spacing:0.178px;">View report after generation</div><div class="a" style="left:501px;top:421px;width:13px;height:13px;background:#f4f4f4;border:1px solid #626262;border-radius:3px"></div><div class="t" style="left:519px;top:421px;font-size:11px;color:#000;line-height:14px;letter-spacing:0.008px;">Auto save before generation</div><div class="a" style="left:501px;top:445px;width:13px;height:13px;background:#f4f4f4;border:1px solid #626262;border-radius:3px"></div><div class="t" style="left:519px;top:445px;font-size:11px;color:#000;line-height:14px;letter-spacing:0.085px;">Compile model to report on compiled information</div><div class="t" style="left:503px;top:472px;font-size:11px;color:#000;line-height:14px;letter-spacing:0.146px;">Evaluate this string after generation:</div><div class="a" style="left:691px;top:470px;width:222px;height:19px;background:#fff;border:1px solid #e6e6e6;border-bottom-color:#8a8a8a;border-radius:2px"></div><div class="t" style="left:494px;top:508px;font-size:11px;color:#000;line-height:14px;letter-spacing:0.167px;">Report description:</div><div class="a" style="left:495px;top:529px;width:426px;height:91px;background:#fff"></div><div class="a" style="left:921px;top:529px;width:1px;height:91px;background:#e2e2e2"></div><div class="t" style="left:499px;top:533px;font-size:11px;color:#000;line-height:14px;letter-spacing:-0.054px;">A report showing a series of Magic Squares and displaying</div><div class="t" style="left:499px;top:547px;font-size:11px;color:#000;line-height:14px;letter-spacing:-0.057px;">them as images.</div><div class="t" style="left:499px;top:575px;font-size:11px;color:#000;line-height:14px;letter-spacing:-0.030px;">A magic square is a matrix in which the columns, rows, and diagonals</div><div class="t" style="left:499px;top:589px;font-size:11px;color:#000;line-height:14px;letter-spacing:-0.038px;">all sum to the same number.</div><div class="a" style="left:786px;top:629px;width:73px;height:21px;background:#f8f8f8;border:1px solid #e6e6e6;border-radius:4px"></div><div class="t" style="left:786px;top:633px;font-size:11px;color:#8a8a8a;line-height:14px;letter-spacing:0.160px;width:73px;text-align:center;">Revert</div><div class="a" style="left:867px;top:629px;width:73px;height:21px;background:#fdfdfd;border:1px solid #d0d0d0;border-bottom-color:#a8a8a8;border-radius:4px"></div><div class="t" style="left:867px;top:633px;font-size:11px;color:#000;line-height:14px;letter-spacing:0.167px;width:73px;text-align:center;">Help</div><div class="a" style="left:947px;top:672px;width:2px;height:2px;background:#b4b4b4"></div><div class="a" style="left:944px;top:675px;width:2px;height:2px;background:#b4b4b4"></div><div class="a" style="left:947px;top:675px;width:2px;height:2px;background:#b4b4b4"></div><div class="a" style="left:941px;top:678px;width:2px;height:2px;background:#b4b4b4"></div><div class="a" style="left:944px;top:678px;width:2px;height:2px;background:#b4b4b4"></div><div class="a" style="left:947px;top:678px;width:2px;height:2px;background:#b4b4b4"></div>
<div class="a" style="left:0;top:0;width:953px;height:683px;border:1px solid #000"></div>
</body></html>
